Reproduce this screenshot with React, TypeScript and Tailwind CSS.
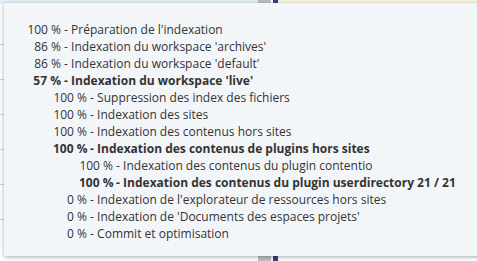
const rows: { pct: string; label: string; level: number; bold?: boolean }[] = [
  { pct: "100 %", label: "Préparation de l'indexation", level: 0 },
  { pct: "86 %", label: "Indexation du workspace 'archives'", level: 0 },
  { pct: "86 %", label: "Indexation du workspace 'default'", level: 0 },
  { pct: "57 %", label: "Indexation du workspace 'live'", level: 0, bold: true },
  { pct: "100 %", label: "Suppression des index des fichiers", level: 1 },
  { pct: "100 %", label: "Indexation des sites", level: 1 },
  { pct: "100 %", label: "Indexation des contenus hors sites", level: 1 },
  { pct: "100 %", label: "Indexation des contenus de plugins hors sites", level: 1, bold: true },
  { pct: "100 %", label: "Indexation des contenus du plugin contentio", level: 2 },
  { pct: "100 %", label: "Indexation des contenus du plugin userdirectory 21 / 21", level: 2, bold: true },
  { pct: "0 %", label: "Indexation de l'explorateur de ressources hors sites", level: 1 },
  { pct: "0 %", label: "Indexation de 'Documents des espaces projets'", level: 1 },
  { pct: "0 %", label: "Commit et optimisation", level: 1 },
];

const indent = ["pl-0", "pl-[26px]", "pl-[52px]"];

export default function App() {
  return (
    <div className="relative w-[477px] h-[261px] overflow-hidden bg-white">
      {/* page behind the popup */}
      <div className="flex h-full">
        <div className="w-[258px] flex flex-col">
          <div className="h-[4px] bg-[#e2edf5]" />
          <div className="flex-1 flex flex-col gap-[34px] pt-[40px]">
            {[0, 1, 2, 3, 4, 5].map((i) => (
              <div key={i} className="h-px bg-[#d6d6d6]" />
            ))}
          </div>
        </div>
        <div className="w-[13px] bg-[#bdbdbd]" />
        <div className="w-[2px] bg-white" />
        <div className="w-[5px] bg-[#3b3b8f]" />
        <div className="flex-1 flex flex-col">
          <div className="h-[4px] bg-[#f8f3df]" />
          <div className="flex-1 bg-white" />
        </div>
      </div>

      {/* progress popup */}
      <div
        className="absolute left-[4px] top-[3px] w-[490px] h-[253px] bg-[#f3f6f9] shadow-[0_1px_4px_rgba(0,0,0,0.35)] pt-[18px] pl-[23px] text-[12px] leading-[17px] text-[#333333]"
        style={{ fontFamily: '"Open Sans", "Noto Sans", sans-serif' }}
      >
        {rows.map((r, i) => (
          <div key={i} className={`flex whitespace-nowrap ${indent[r.level]} ${r.bold ? "font-bold" : ""}`}>
            <span className="w-[34px] text-right">{r.pct}</span>
            <span>&nbsp;- {r.label}</span>
          </div>
        ))}
      </div>
    </div>
  );
}
